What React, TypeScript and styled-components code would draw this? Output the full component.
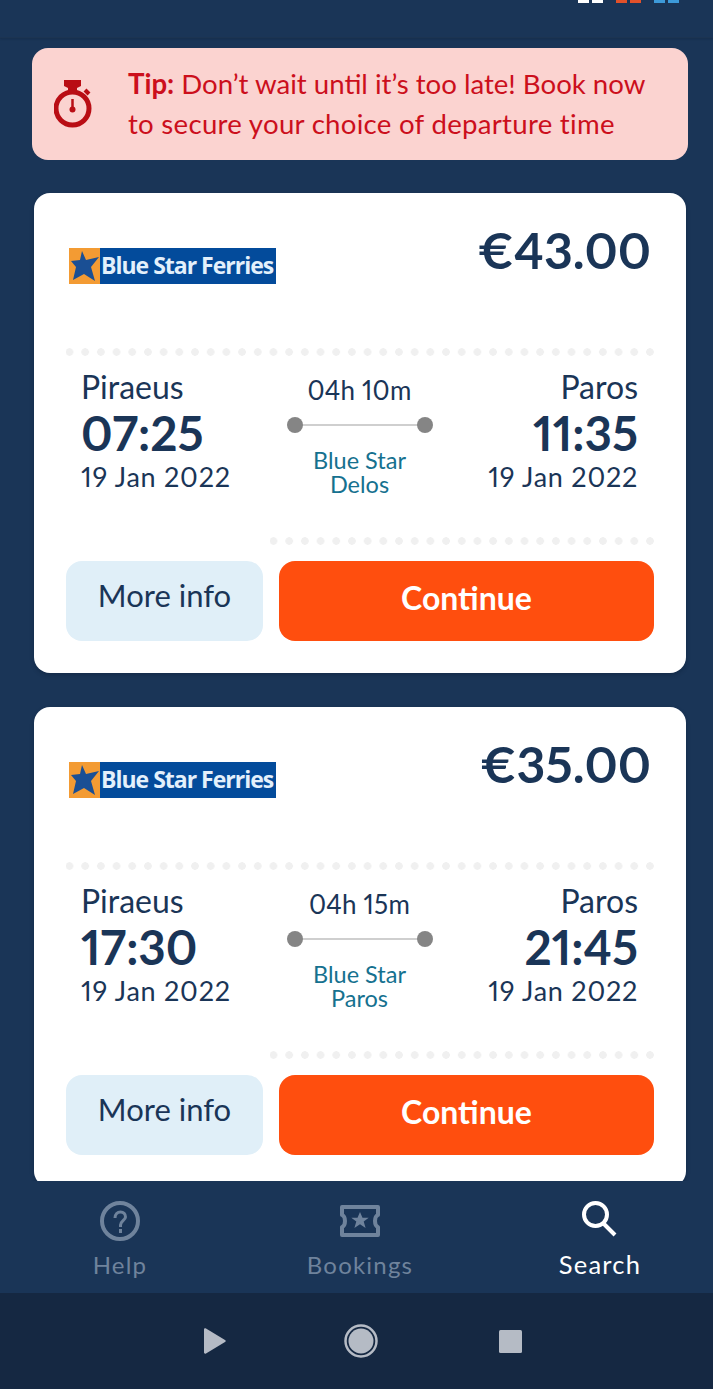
import React from "react";
import styled, { createGlobalStyle } from "styled-components";

const NAVY = "#1a3557";

const GlobalStyle = createGlobalStyle`
  html, body {
    margin: 0;
    padding: 0;
    background: ${NAVY};
    font-family: "Lato", "Open Sans", sans-serif;
    font-variant-numeric: proportional-nums;
  }
  * { box-sizing: border-box; }
`;

const Screen = styled.div`
  width: 713px;
  height: 1389px;
  display: flex;
  flex-direction: column;
  overflow: hidden;
  background: ${NAVY};
`;

const TopBar = styled.div`
  height: 38px;
  flex: none;
  display: flex;
  justify-content: flex-end;
  gap: 13px;
  padding-right: 34px;
  border-bottom: 1px solid #1c3452;
  box-shadow: 0 1px 2px rgba(10, 25, 45, 0.25);
`;

const MenuGlyph = styled.div<{ $color: string }>`
  width: 25px;
  height: 3px;
  background: linear-gradient(
    to right,
    ${(p) => p.$color} 0 11px,
    transparent 11px 14px,
    ${(p) => p.$color} 14px
  );
`;

const Content = styled.div`
  flex: 1;
  min-height: 0;
  overflow: hidden;
  padding-top: 10px;
`;

const Tip = styled.div`
  height: 112px;
  margin: 0 25px 33px 32px;
  background: #fbd3d0;
  border-radius: 16px;
  display: flex;
  align-items: center;
  padding-left: 22px;
  color: #cc0f1c;
`;

const TipText = styled.p`
  margin: 0 0 0 36px;
  font-size: 27.6px;
  line-height: 40px;
  b {
    font-weight: 700;
  }
`;

const TipSecondLine = styled.span`
  letter-spacing: 0.28px;
`;

const Card = styled.div`
  margin: 0 27px 34px 34px;
  height: 480px;
  background: #fff;
  border-radius: 16px;
  padding: 0 32px;
  box-shadow: 0 2px 4px rgba(8, 20, 40, 0.3);
`;

const CardHead = styled.div`
  height: 155px;
  padding: 27px 3px 0 3px;
  display: flex;
  justify-content: space-between;
  align-items: flex-start;
`;

const Logo = styled.div`
  margin-top: 28px;
  width: 207px;
  height: 36px;
  display: flex;
  background: #034b9b;
  overflow: hidden;
`;

const LogoMark = styled.div`
  width: 31px;
  flex: none;
  background: #f39b33;
  display: flex;
  align-items: center;
  justify-content: center;
`;

const LogoName = styled.span`
  padding-left: 1px;
  color: #e3f0fb;
  font-family: "Open Sans", sans-serif;
  font-weight: 700;
  font-size: 23px;
  line-height: 35px;
  letter-spacing: -1px;
  white-space: nowrap;
`;

const Price = styled.div`
  font-size: 50px;
  line-height: 60px;
  font-weight: 700;
  color: ${NAVY};
`;

const Dots = styled.div<{ $inset?: number }>`
  height: 8px;
  margin-left: ${(p) => p.$inset ?? 0}px;
  background-image: radial-gradient(circle, #f0f0f0 3.5px, transparent 4px);
  background-size: 15.7px 8px;
  background-position: -4.35px 0;
  background-repeat: repeat-x;
`;

const Route = styled.div`
  height: 181px;
  padding: 13px 16px 0 15px;
  display: grid;
  grid-template-columns: 1fr 150px 1fr;
`;

const Stop = styled.div<{ $end?: boolean }>`
  text-align: ${(p) => (p.$end ? "right" : "left")};
  color: ${NAVY};
`;

const City = styled.div`
  font-size: 32px;
  line-height: 36px;
`;

const Time = styled.div`
  margin-top: 3px;
  font-size: 47.5px;
  line-height: 50px;
  font-weight: 700;
`;

const DateText = styled.div`
  margin-top: 3px;
  font-size: 27px;
  line-height: 32px;
  letter-spacing: 0.75px;
`;

const Trip = styled.div`
  padding-top: 5px;
  text-align: center;
`;

const Duration = styled.div`
  font-size: 26px;
  line-height: 32px;
  letter-spacing: 0.2px;
  color: ${NAVY};
`;

const Track = styled.div`
  position: relative;
  margin: 11px 0 0 10px;
  width: 130px;
  height: 16px;
  &::before {
    content: "";
    position: absolute;
    left: 0;
    right: 0;
    top: 7px;
    height: 2px;
    background: #cfcfcf;
  }
`;

const TrackDot = styled.span<{ $end?: boolean }>`
  position: absolute;
  top: 0;
  ${(p) => (p.$end ? "right: -8px;" : "left: -8px;")}
  width: 16px;
  height: 16px;
  border-radius: 50%;
  background: #858585;
`;

const Vessel = styled.div`
  margin-top: 15px;
  font-size: 23.5px;
  line-height: 24px;
  color: #16718f;
`;

const Actions = styled.div`
  margin-top: 16px;
  display: flex;
  gap: 16px;
`;

const Button = styled.button<{ $primary?: boolean }>`
  height: 80px;
  border: 0;
  border-radius: 16px;
  padding: 0 0 ${(p) => (p.$primary ? "8px" : "12px")};
  font-family: inherit;
  flex: ${(p) => (p.$primary ? 1 : "none")};
  width: ${(p) => (p.$primary ? "auto" : "197px")};
  background: ${(p) => (p.$primary ? "#ff4e0e" : "#e0eff8")};
  color: ${(p) => (p.$primary ? "#fff" : NAVY)};
  font-size: ${(p) => (p.$primary ? "32px" : "31px")};
  font-weight: ${(p) => (p.$primary ? 700 : 400)};
`;

const TabBar = styled.nav`
  height: 112px;
  flex: none;
  display: flex;
  gap: 120px;
  padding-left: 60px;
  background: ${NAVY};
`;

const Tab = styled.div<{ $active?: boolean }>`
  width: 120px;
  display: flex;
  flex-direction: column;
  align-items: center;
  padding-top: 18px;
  color: ${(p) => (p.$active ? "#fff" : "#6f839c")};
`;

const TabLabel = styled.span<{ $active?: boolean }>`
  margin-top: ${(p) => (p.$active ? "8px" : "9px")};
  font-size: ${(p) => (p.$active ? "25.5px" : "24px")};
  line-height: 30px;
  letter-spacing: 1.2px;
`;

const SystemBar = styled.div`
  height: 96px;
  flex: none;
  background: #152842;
  display: flex;
  align-items: center;
  gap: 118px;
  padding-left: 204px;
  color: #b5bbc5;
`;

const RecentsSlot = styled.div`
  margin-left: 3px;
  display: flex;
`;

const StopwatchIcon = () => (
  <svg width="38" height="48" viewBox="0 0 38 48" fill="none">
    <path d="M10 0h17v6l-4 2v3h-9V8l-4-2z" fill="#b90d14" />
    <path d="M31 10l4 4" stroke="#b90d14" strokeWidth="4" />
    <circle cx="18.5" cy="28.5" r="16.5" stroke="#b90d14" strokeWidth="5" />
    <path d="M18.5 19v10" stroke="#b90d14" strokeWidth="2.5" />
    <circle cx="18.5" cy="29.5" r="3" fill="#b90d14" />
  </svg>
);

const StarMark = () => (
  <svg width="30" height="32" viewBox="0 0 30 32">
    <path
      d="M12 1l4 9 13-3-8 10 4 14-11-7-11 6 3-13L1 11l9-1z"
      fill="#1a4f94"
    />
  </svg>
);

const HelpIcon = () => (
  <svg width="40" height="42" viewBox="0 0 40 42" fill="none" stroke="currentColor">
    <circle cx="20" cy="22" r="18" strokeWidth="4" />
    <path d="M15 19c0-4 2.500-6 5.500-6s5 2 5 5c0 3-5 4-5 8v2" strokeWidth="3" />
    <path d="M20.500 30v4" strokeWidth="3" />
  </svg>
);

const TicketIcon = () => (
  <svg width="40" height="42" viewBox="0 0 40 42" fill="none">
    <path
      d="M2 8h36v8c-4 1.500-4 10.500 0 12v8H2v-8c4-1.500 4-10.500 0-12z"
      stroke="currentColor"
      strokeWidth="4"
      strokeLinejoin="round"
    />
    <path
      d="M20 13l2.500 5.800h6.200l-5 3.800 1.900 6.400-5.600-3.800-5.600 3.800 1.900-6.400-5-3.800h6.200z"
      fill="currentColor"
    />
  </svg>
);

const SearchIcon = () => (
  <svg width="40" height="42" viewBox="0 0 40 42" fill="none" stroke="currentColor">
    <circle cx="15.500" cy="15.500" r="11.500" strokeWidth="4" />
    <path d="M23 24l12 12" strokeWidth="4" />
  </svg>
);

const BackIcon = () => (
  <svg width="22" height="26" viewBox="0 0 22 26" fill="currentColor">
    <path d="M0 1.500c0-1 1-1.500 2-1L21 12c1 .6 1 1.400 0 2L2 25.500c-1 .5-2 0-2-1z" />
  </svg>
);

const HomeIcon = () => (
  <svg width="34" height="36" viewBox="0 0 34 36" fill="currentColor">
    <circle cx="17" cy="18" r="12.500" />
    <circle cx="17" cy="18" r="15.500" fill="none" stroke="currentColor" strokeWidth="2.500" />
  </svg>
);

const RecentsIcon = () => (
  <svg width="23" height="23" viewBox="0 0 23 23" fill="currentColor">
    <rect x="0" y="0" width="23" height="23" rx="1.500" />
  </svg>
);

type Sailing = {
  price: string;
  depart: string;
  arrive: string;
  duration: string;
  vessel: string;
};

const sailings: Sailing[] = [
  { price: "€43.00", depart: "07:25", arrive: "11:35", duration: "04h 10m", vessel: "Delos" },
  { price: "€35.00", depart: "17:30", arrive: "21:45", duration: "04h 15m", vessel: "Paros" },
];

const App = () => (
  <Screen>
    <GlobalStyle />
    <TopBar>
      <MenuGlyph $color="#ffffff" />
      <MenuGlyph $color="#e2512a" />
      <MenuGlyph $color="#3d9ad9" />
    </TopBar>
    <Content>
      <Tip>
        <StopwatchIcon />
        <TipText>
          <b>Tip:</b> Don’t wait until it’s too late! Book now
          <br />
          <TipSecondLine>to secure your choice of departure time</TipSecondLine>
        </TipText>
      </Tip>
      {sailings.map((s) => (
        <Card key={s.price}>
          <CardHead>
            <Logo>
              <LogoMark>
                <StarMark />
              </LogoMark>
              <LogoName>Blue Star Ferries</LogoName>
            </Logo>
            <Price>{s.price}</Price>
          </CardHead>
          <Dots />
          <Route>
            <Stop>
              <City>Piraeus</City>
              <Time>{s.depart}</Time>
              <DateText>19 Jan 2022</DateText>
            </Stop>
            <Trip>
              <Duration>{s.duration}</Duration>
              <Track>
                <TrackDot />
                <TrackDot $end />
              </Track>
              <Vessel>
                Blue Star
                <br />
                {s.vessel}
              </Vessel>
            </Trip>
            <Stop $end>
              <City>Paros</City>
              <Time>{s.arrive}</Time>
              <DateText>19 Jan 2022</DateText>
            </Stop>
          </Route>
          <Dots $inset={204} />
          <Actions>
            <Button>More info</Button>
            <Button $primary>Continue</Button>
          </Actions>
        </Card>
      ))}
    </Content>
    <TabBar>
      <Tab>
        <HelpIcon />
        <TabLabel>Help</TabLabel>
      </Tab>
      <Tab>
        <TicketIcon />
        <TabLabel>Bookings</TabLabel>
      </Tab>
      <Tab $active>
        <SearchIcon />
        <TabLabel $active>Search</TabLabel>
      </Tab>
    </TabBar>
    <SystemBar>
      <BackIcon />
      <HomeIcon />
      <RecentsSlot>
        <RecentsIcon />
      </RecentsSlot>
    </SystemBar>
  </Screen>
);

export default App;
